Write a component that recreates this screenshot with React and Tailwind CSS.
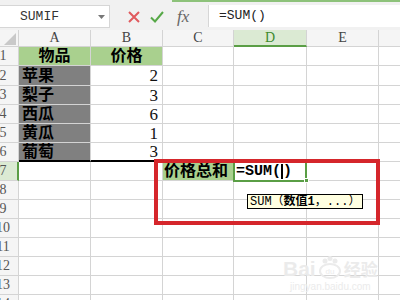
import React from "react";

const cjk = "font-['Liberation_Sans','Noto_Sans_CJK_SC',sans-serif]";
const serif = "font-['Liberation_Serif',serif]";
const mono = "font-['Liberation_Mono','Noto_Sans_CJK_SC',monospace]";

const colW = ["w-[72px]", "w-[72px]", "w-[71px]", "w-[73px]", "w-[72px]"];
const letters = ["A", "B", "C", "D", "E"];

const goods = [
  ["苹果", "2"],
  ["梨子", "3"],
  ["西瓜", "6"],
  ["黄瓜", "1"],
  ["葡萄", "3"],
];

function RowHead({ n, active }) {
  return (
    <div
      className={
        "w-[19px] shrink-0 overflow-hidden border-r border-b border-[#d4d4d4] flex items-center " +
        (active ? "bg-[#dbead3] border-r-2 border-r-[#5a9e45]" : "bg-[#f5f5f5]")
      }
    >
      <div className={"w-[26px] -ml-[10px] shrink-0 text-center text-[14px] leading-none text-[#555] " + serif}>
        {n}
      </div>
    </div>
  );
}

function Cell({ i, className = "", children }) {
  return (
    <div className={colW[i] + " shrink-0 border-r border-b border-[#d4d4d4] flex items-center " + className}>
      {children}
    </div>
  );
}

export default function App() {
  const rest = [8, 9, 10, 11, 12, 13, 14];
  return (
    <div className="relative w-[400px] h-[300px] overflow-hidden bg-white">
      {/* toolbar */}
      <div className="h-[30px] bg-[#f1f1f1] flex flex-col">
        <div className="h-[2px] flex">
          <div className="w-[172px]" />
          <div className="flex-1 bg-[#8dc27a]" />
        </div>
        <div className="flex items-start pt-[3px]">
          <div className="w-[110px] h-[23px] bg-white border border-l-0 border-[#d6d6d6] flex items-center justify-between pl-[20px] pr-[4px]">
            <span className={"text-[13px] text-[#333] " + mono}>SUMIF</span>
            <svg width="7" height="4" viewBox="0 0 7 4">
              <path d="M0 0h7L3.5 4z" fill="#777" />
            </svg>
          </div>
          <div className="w-[98px] flex items-center h-[23px] pl-[18px] gap-[10px]">
            <svg width="12" height="12" viewBox="0 0 12 12">
              <path d="M1 1L11 11M11 1L1 11" stroke="#e05a5e" strokeWidth="2" />
            </svg>
            <svg width="14" height="12" viewBox="0 0 14 12">
              <path d="M1 6.5L5 10.5L13 1" stroke="#56a847" strokeWidth="2" fill="none" />
            </svg>
            <span className={"italic text-[17px] leading-none text-[#666] ml-[3px] " + serif}>fx</span>
          </div>
          <div className="flex-1 h-[22px] bg-white border-l border-[#d6d6d6] flex items-center pl-[10px]">
            <span className={"text-[13px] text-[#222] " + mono}>=SUM()</span>
          </div>
        </div>
      </div>

      {/* column header */}
      <div className="flex h-[17px]">
        <div className="w-[19px] shrink-0 border-r border-b border-[#d4d4d4] bg-[#f5f5f5] flex items-end justify-end pr-[2px] pb-[1px]">
          <svg width="12" height="12" viewBox="0 0 12 12">
            <path d="M12 0V12H0z" fill="#c9c9c9" />
          </svg>
        </div>
        {letters.map((l, i) => (
          <div
            key={l}
            className={
              colW[i] +
              " shrink-0 border-r flex items-center justify-center text-[14px] leading-none " +
              serif +
              (l === "D"
                ? " bg-[#dbead3] border-[#d4d4d4] border-b-2 border-b-[#5a9e45] text-[#3f8a2e]"
                : " bg-[#f5f5f5] border-b border-[#d4d4d4] text-[#444]")
            }
          >
            {l}
          </div>
        ))}
        <div className="flex-1 bg-[#f5f5f5] border-b border-[#d4d4d4]" />
      </div>

      {/* row 1 */}
      <div className="flex h-[19px]">
        <RowHead n={1} />
        <Cell i={0} className={"bg-[#a9d08e] justify-center text-[16px] font-bold text-black " + cjk}>物品</Cell>
        <Cell i={1} className={"bg-[#a9d08e] justify-center text-[16px] font-bold text-black " + cjk}>价格</Cell>
        <Cell i={2} />
        <Cell i={3} />
        <Cell i={4} />
        <div className="flex-1 border-b border-[#d4d4d4]" />
      </div>

      {/* rows 2-6 */}
      {goods.map(([name, price], r) => {
        const last = r === 4;
        return (
          <div key={name} className={r === 0 ? "flex h-[20px]" : "flex h-[19px]"}>
            <RowHead n={r + 2} />
            <Cell
              i={0}
              className={
                "bg-[#808080] pl-[3px] text-[16px] font-bold text-black leading-none " +
                cjk +
                (last ? " border-b-2 border-b-black" : "")
              }
            >
              {name}
            </Cell>
            <Cell
              i={1}
              className={
                "justify-end pr-[4px] text-[17px] text-[#111] leading-none " +
                serif +
                (last ? " border-b-2 border-b-black" : "")
              }
            >
              {price}
            </Cell>
            <Cell i={2} className={last ? "border-b-2 border-b-black" : ""} />
            <Cell i={3} />
            <Cell i={4} />
            <div className="flex-1 border-b border-[#d4d4d4]" />
          </div>
        );
      })}

      {/* row 7 */}
      <div className="flex h-[19px]">
        <RowHead n={7} active />
        <Cell i={0} />
        <Cell i={1} />
        <Cell i={2} className={"bg-[#a9d08e] pl-[1px] text-[16px] font-bold text-black leading-none " + cjk}>
          价格总和
        </Cell>
        <Cell i={3} className="relative">
          <div className="absolute -left-[1px] -top-[1px] w-[74px] h-[21px] border-2 border-[#5a9e45]" />
          <div className="absolute -right-[3px] -bottom-[3px] w-[5px] h-[5px] bg-[#5a9e45] border border-white" />
          <span className={"pl-[2px] text-[15px] font-bold text-black leading-none flex items-center " + mono}>
            =SUM(<span className="inline-block w-[2px] h-[15px] bg-black" />)
          </span>
        </Cell>
        <Cell i={4} />
        <div className="flex-1 border-b border-[#d4d4d4]" />
      </div>

      {/* rows 8-14 */}
      {rest.map((n) => (
        <div key={n} className="flex h-[19px]">
          <RowHead n={n} />
          <Cell i={0} />
          <Cell i={1} />
          <Cell i={2} />
          <Cell i={3} />
          <Cell i={4} />
          <div className="flex-1 border-b border-[#d4d4d4]" />
        </div>
      ))}

      {/* function hint */}
      <div
        className={
          "absolute left-[247px] top-[194px] h-[15px] px-[2px] bg-[#ffffe1] border border-black flex items-center text-[12px] leading-none text-black whitespace-pre " +
          mono
        }
      >
        SUM（<span className="font-bold">数值1</span>，...）
      </div>

      {/* red annotation box */}
      <div className="absolute left-[154px] top-[159px] w-[226px] h-[66px] border-4 border-[#d5262b]" />

      {/* watermark */}
      <div className="absolute left-[283px] top-[255px] flex flex-col items-center text-[#ebebeb] pointer-events-none">
        <div className="flex items-end gap-[2px]">
          <span className="font-['Liberation_Sans',sans-serif] font-bold text-[21px] leading-none">Bai</span>
          <svg width="24" height="24" viewBox="0 0 24 24">
            <circle cx="7" cy="6" r="2.5" fill="#ebebeb" />
            <circle cx="12" cy="3.5" r="2.5" fill="#ebebeb" />
            <circle cx="17" cy="6" r="2.5" fill="#ebebeb" />
            <ellipse cx="12" cy="16" rx="10" ry="7" fill="none" stroke="#ebebeb" strokeWidth="2" />
            <text x="12" y="19" fontSize="8" textAnchor="middle" fill="#ebebeb" fontFamily="Liberation Sans">du</text>
          </svg>
          <span className={"font-bold text-[17px] leading-none " + cjk}>经验</span>
        </div>
        <span className="font-['Liberation_Sans',sans-serif] text-[10px] leading-none mt-[3px]">jingyan.baidu.com</span>
      </div>
    </div>
  );
}
